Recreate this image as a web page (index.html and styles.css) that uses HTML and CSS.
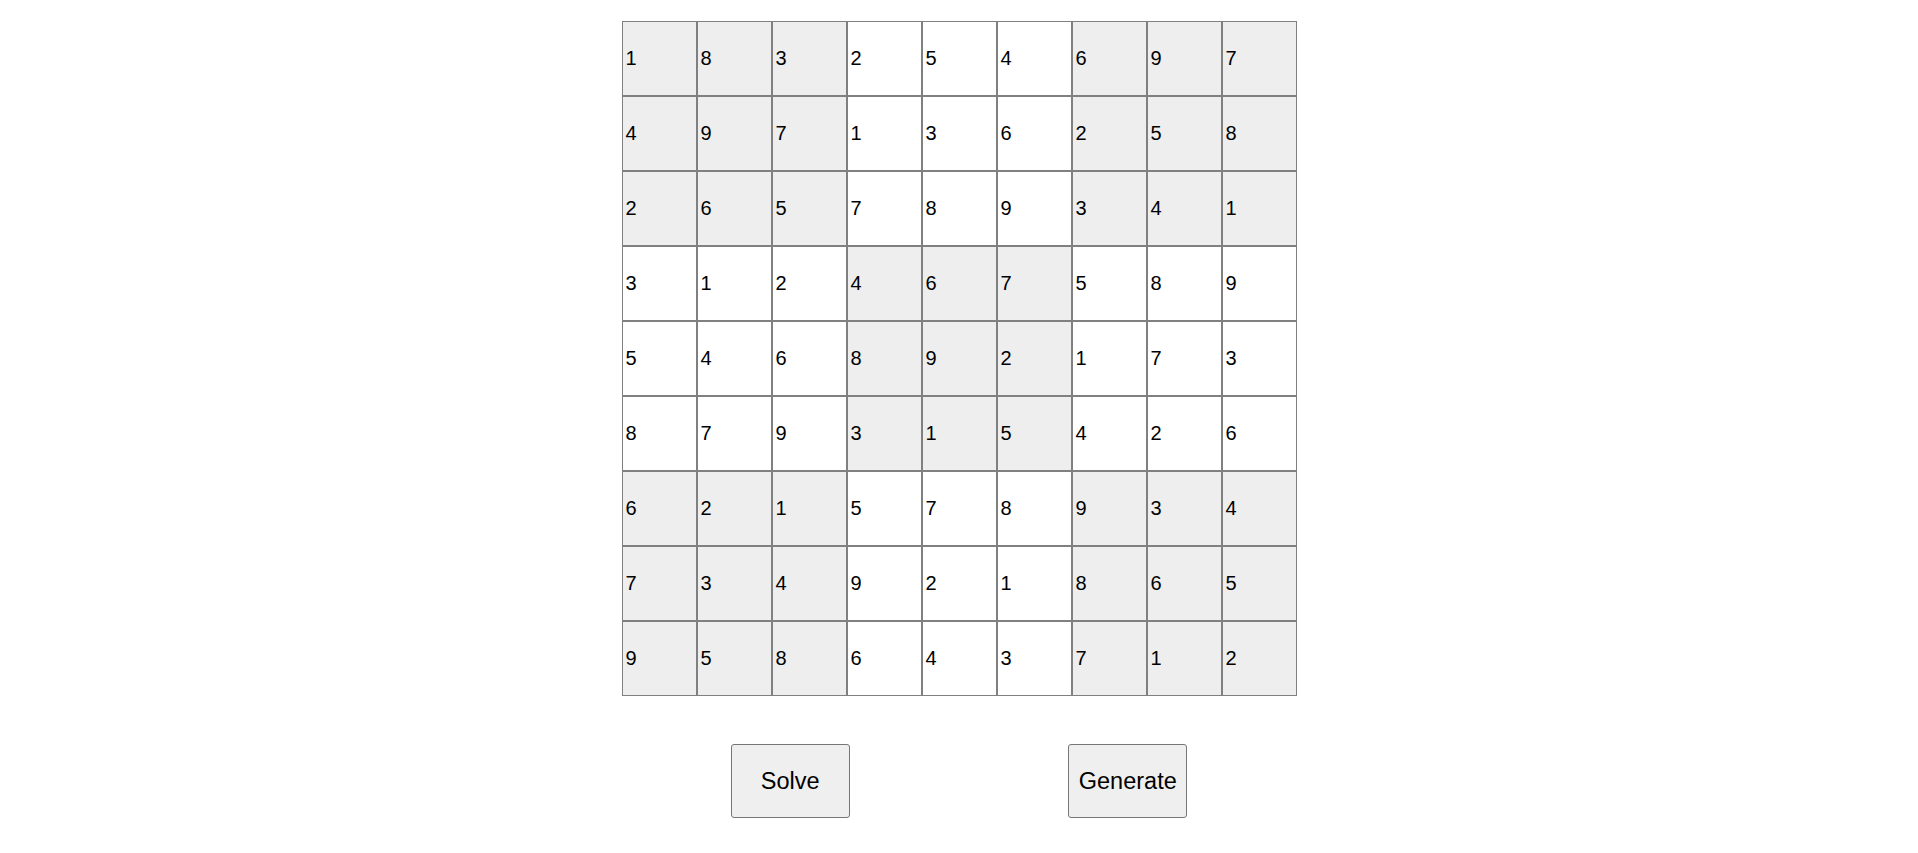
FILE: index.html
```html
<!DOCTYPE html>
<html>
<head>
<meta charset="utf-8">
<link rel="stylesheet" href="styles.css">
</head>
<body>
<div class="app">
  <div class="board">
    <div class="cell shade">1</div><div class="cell shade">8</div><div class="cell shade">3</div><div class="cell">2</div><div class="cell">5</div><div class="cell">4</div><div class="cell shade">6</div><div class="cell shade">9</div><div class="cell shade">7</div>
    <div class="cell shade">4</div><div class="cell shade">9</div><div class="cell shade">7</div><div class="cell">1</div><div class="cell">3</div><div class="cell">6</div><div class="cell shade">2</div><div class="cell shade">5</div><div class="cell shade">8</div>
    <div class="cell shade">2</div><div class="cell shade">6</div><div class="cell shade">5</div><div class="cell">7</div><div class="cell">8</div><div class="cell">9</div><div class="cell shade">3</div><div class="cell shade">4</div><div class="cell shade">1</div>
    <div class="cell">3</div><div class="cell">1</div><div class="cell">2</div><div class="cell shade">4</div><div class="cell shade">6</div><div class="cell shade">7</div><div class="cell">5</div><div class="cell">8</div><div class="cell">9</div>
    <div class="cell">5</div><div class="cell">4</div><div class="cell">6</div><div class="cell shade">8</div><div class="cell shade">9</div><div class="cell shade">2</div><div class="cell">1</div><div class="cell">7</div><div class="cell">3</div>
    <div class="cell">8</div><div class="cell">7</div><div class="cell">9</div><div class="cell shade">3</div><div class="cell shade">1</div><div class="cell shade">5</div><div class="cell">4</div><div class="cell">2</div><div class="cell">6</div>
    <div class="cell shade">6</div><div class="cell shade">2</div><div class="cell shade">1</div><div class="cell">5</div><div class="cell">7</div><div class="cell">8</div><div class="cell shade">9</div><div class="cell shade">3</div><div class="cell shade">4</div>
    <div class="cell shade">7</div><div class="cell shade">3</div><div class="cell shade">4</div><div class="cell">9</div><div class="cell">2</div><div class="cell">1</div><div class="cell shade">8</div><div class="cell shade">6</div><div class="cell shade">5</div>
    <div class="cell shade">9</div><div class="cell shade">5</div><div class="cell shade">8</div><div class="cell">6</div><div class="cell">4</div><div class="cell">3</div><div class="cell shade">7</div><div class="cell shade">1</div><div class="cell shade">2</div>
  </div>
  <div class="actions">
    <button class="btn">Solve</button>
    <button class="btn">Generate</button>
  </div>
</div>
</body>
</html>
```

FILE: styles.css
```css
html, body {
  margin: 0;
  padding: 0;
  background: #ffffff;
}
body {
  font-family: "Liberation Sans", Arial, sans-serif;
}
.app {
  width: 675px;
  margin: 0 auto;
  padding-top: 21px;
}
.board {
  display: grid;
  grid-template-columns: repeat(9, 75px);
  grid-template-rows: repeat(9, 75px);
}
.cell {
  box-sizing: border-box;
  border: 1px solid #808080;
  background: #ffffff;
  color: #000000;
  font-size: 20px;
  padding: 0 3px;
  display: flex;
  align-items: center;
}
.cell.shade {
  background: #eeeeee;
}
.actions {
  display: flex;
  justify-content: space-around;
  margin-top: 48px;
}
.btn {
  box-sizing: border-box;
  width: 119px;
  height: 74px;
  font-family: "Liberation Sans", Arial, sans-serif;
  font-size: 23.5px;
  color: #000000;
  background: #efefef;
  border: 1px solid #767676;
  border-radius: 3px;
  padding: 0;
}
```
